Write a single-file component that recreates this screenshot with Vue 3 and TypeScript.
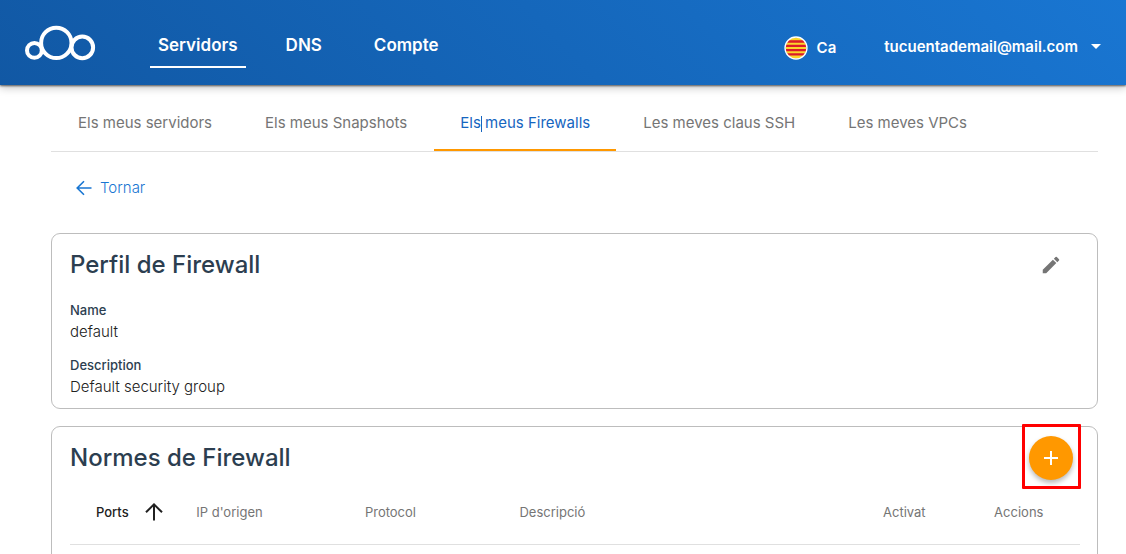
<script setup lang="ts">
interface Item {
  label: string
  active?: boolean
}

const navigation: Item[] = [
  { label: 'Servidors', active: true },
  { label: 'DNS' },
  { label: 'Compte' },
]

const tabs: Item[] = [
  { label: 'Els meus servidors' },
  { label: 'Els meus Snapshots' },
  { label: 'Els meus Firewalls', active: true },
  { label: 'Les meves claus SSH' },
  { label: 'Les meves VPCs' },
]

const profile = [
  { term: 'Name', value: 'default' },
  { term: 'Description', value: 'Default security group' },
]

const columns = [
  { key: 'ports', label: 'Ports' },
  { key: 'source', label: "IP d'origen" },
  { key: 'protocol', label: 'Protocol' },
  { key: 'description', label: 'Descripció' },
  { key: 'enabled', label: 'Activat' },
  { key: 'actions', label: 'Accions' },
]
</script>

<template>
  <div class="page">
    <header class="topbar">
      <a class="logo" href="#" aria-label="Inici">
        <svg width="72" height="38" viewBox="0 0 72 38" fill="none" stroke="#fff" stroke-width="4">
          <circle cx="10.400" cy="26.400" r="7.400" />
          <circle cx="32.300" cy="18.900" r="15.200" />
          <circle cx="58.300" cy="23.400" r="10.800" />
        </svg>
      </a>
      <nav class="nav">
        <a v-for="item in navigation" :key="item.label" href="#" :class="{ active: item.active }">{{ item.label }}</a>
      </nav>
      <button class="language" type="button">
        <svg width="24" height="24" viewBox="0 0 24 24">
          <defs>
            <clipPath id="flag"><circle cx="12" cy="12" r="10.600" /></clipPath>
          </defs>
          <g clip-path="url(#flag)">
            <rect width="24" height="24" fill="#fbd52b" />
            <path d="M0 5.500h24M0 9.800h24M0 14.100h24M0 18.400h24" stroke="#db1a2a" stroke-width="2.300" />
          </g>
          <circle cx="12" cy="12" r="11" fill="none" stroke="#fff" stroke-width="1.300" />
        </svg>
        <span>Ca</span>
      </button>
      <button class="account" type="button">
        <span>tucuentademail@mail.com</span>
        <svg width="10" height="5" viewBox="0 0 10 5"><path d="M0 0h10L5 5z" fill="#fff" /></svg>
      </button>
    </header>

    <main class="content">
      <nav class="tabs">
        <a v-for="tab in tabs" :key="tab.label" href="#" :class="{ active: tab.active }">
          <template v-if="tab.active">Els<span class="caret"></span> meus Firewalls</template>
          <template v-else>{{ tab.label }}</template>
        </a>
      </nav>

      <a class="back" href="#">
        <svg width="16" height="16" viewBox="0 0 16 16" fill="none" stroke="currentColor" stroke-width="1.600">
          <path d="M15.500 8H1.500M8 1.200L1.200 8L8 14.800" />
        </svg>
        <span>Tornar</span>
      </a>

      <section class="card">
        <div class="card-head">
          <h2>Perfil de Firewall</h2>
          <button class="edit" type="button" aria-label="Edita">
            <svg width="22" height="22" viewBox="0 0 24 24" fill="#757575">
              <path d="M3 17.250V21h3.750L17.810 9.940l-3.750-3.750L3 17.250zM20.710 7.040a1 1 0 0 0 0-1.410l-2.340-2.340a1 1 0 0 0-1.410 0l-1.830 1.830 3.750 3.750 1.830-1.830z" />
            </svg>
          </button>
        </div>
        <dl class="profile">
          <div v-for="field in profile" :key="field.term">
            <dt>{{ field.term }}</dt>
            <dd>{{ field.value }}</dd>
          </div>
        </dl>
      </section>

      <section class="card rules">
        <div class="card-head">
          <h2>Normes de Firewall</h2>
          <button class="add" type="button" aria-label="Afegeix">
            <svg width="14" height="14" viewBox="0 0 14 14"><path d="M7 0v14M0 7h14" stroke="#fff" stroke-width="2" /></svg>
          </button>
        </div>
        <table>
          <thead>
            <tr>
              <th v-for="column in columns" :key="column.key" :class="column.key" scope="col">
                <button v-if="column.key === 'ports'" class="sort" type="button">
                  <span>{{ column.label }}</span>
                  <svg width="18" height="18" viewBox="0 0 18 18" fill="none" stroke="currentColor" stroke-width="2">
                    <path d="M9 17.500V2M1 9.300L9 1.400L17 9.300" />
                  </svg>
                </button>
                <template v-else>{{ column.label }}</template>
              </th>
            </tr>
          </thead>
        </table>
      </section>
    </main>
  </div>
</template>

<style>
body {
  background: #fff;
}
</style>

<style scoped>
* {
  box-sizing: border-box;
}

.page {
  display: flex;
  flex-direction: column;
  height: 100vh;
  overflow: hidden;
  font-family: Inter, "Liberation Sans", sans-serif;
  color: #212121;
}

button {
  padding: 0;
  border: 0;
  background: none;
  font: inherit;
  color: inherit;
}

a {
  color: inherit;
  text-decoration: none;
}

svg {
  display: block;
  flex: none;
}

.topbar {
  display: flex;
  flex: none;
  align-items: center;
  padding: 18px 25px 17px 24px;
  background: linear-gradient(45deg, #1158a4, #1976d2);
  box-shadow: 0 1px 2px rgba(0, 0, 0, 0.6), 0 3px 8px rgba(0, 0, 0, 0.22);
  color: #fff;
  font-weight: 600;
}

.nav {
  display: flex;
  gap: 32px;
  margin-left: 54px;
  margin-right: auto;
}

.nav a {
  padding: 17px 8px 10px;
  border-bottom: 2px solid transparent;
  font-size: 17px;
  line-height: 21px;
}

.nav a.active {
  border-color: #fff;
}

.nav a:last-child {
  margin-left: 4px;
}

.language {
  display: flex;
  align-items: center;
  gap: 9px;
  margin-top: 9px;
  margin-right: 48px;
  font-size: 15px;
}

.account {
  display: flex;
  align-items: center;
  gap: 13px;
  margin-top: 7px;
  font-size: 15px;
}

.content {
  display: flex;
  flex: 1;
  flex-direction: column;
  padding: 0 28px 0 51px;
}

.tabs {
  display: flex;
  flex: none;
  gap: 1px;
  padding-left: 1px;
  border-bottom: 1px solid #e0e0e0;
}

.tabs a {
  padding: 28px 26px 16px;
  border-bottom: 2px solid transparent;
  color: #757575;
  font-size: 15px;
  line-height: 20px;
}

.tabs a.active {
  border-color: #ff9800;
  color: #1565c0;
}

.caret {
  display: inline-block;
  width: 1px;
  height: 16px;
  margin-right: -1px;
  background: #1565c0;
  vertical-align: -4px;
}

.back {
  display: flex;
  align-items: center;
  align-self: flex-start;
  gap: 8px;
  margin: 26px 0 35px 25px;
  color: #1976d2;
  font-size: 15px;
  font-weight: 300;
  line-height: 20px;
}

.card {
  flex: none;
  margin-bottom: 17px;
  padding: 9px 17px 9px 18px;
  border: 1px solid #bdbdbd;
  border-radius: 9px;
}

.card-head {
  display: flex;
  align-items: center;
  justify-content: space-between;
  height: 44px;
}

h2 {
  margin: 0;
  color: #2c3e50;
  font-size: 24px;
  font-weight: 500;
  line-height: 32px;
}

.edit {
  margin-right: 18px;
}

.profile {
  display: grid;
  gap: 11px;
  margin: 13px 0 0;
}

.profile dt {
  color: #2c3e50;
  font-size: 13px;
  font-weight: 500;
  line-height: 20px;
}

.profile dd {
  margin: 0;
  font-size: 15px;
  font-weight: 300;
  line-height: 24px;
}

.rules {
  flex: 1;
  margin-bottom: -20px;
}

.add {
  position: relative;
  display: grid;
  place-items: center;
  width: 44px;
  height: 44px;
  margin-right: 7px;
  border-radius: 50%;
  background: #ff9800;
  box-shadow: 0 3px 5px rgba(0, 0, 0, 0.28);
}

.add::after {
  content: "";
  position: absolute;
  inset: -12px -8px -9px -7px;
  border: 3px solid #f00;
  border-radius: 1px;
}

table {
  width: 100%;
  table-layout: fixed;
  border-collapse: collapse;
}

th {
  height: 64px;
  padding: 0;
  border-bottom: 1px solid #e0e0e0;
  color: #757575;
  font-size: 13px;
  font-weight: 400;
  text-align: left;
  white-space: nowrap;
}

.ports {
  width: 12.5%;
  padding-left: 26px;
}

.source {
  width: 16.7%;
}

.protocol {
  width: 15.3%;
}

.description {
  width: 36%;
}

.enabled {
  width: 11%;
}

.sort {
  display: flex;
  align-items: center;
  gap: 16px;
  color: #212121;
  font-weight: 500;
}
</style>
